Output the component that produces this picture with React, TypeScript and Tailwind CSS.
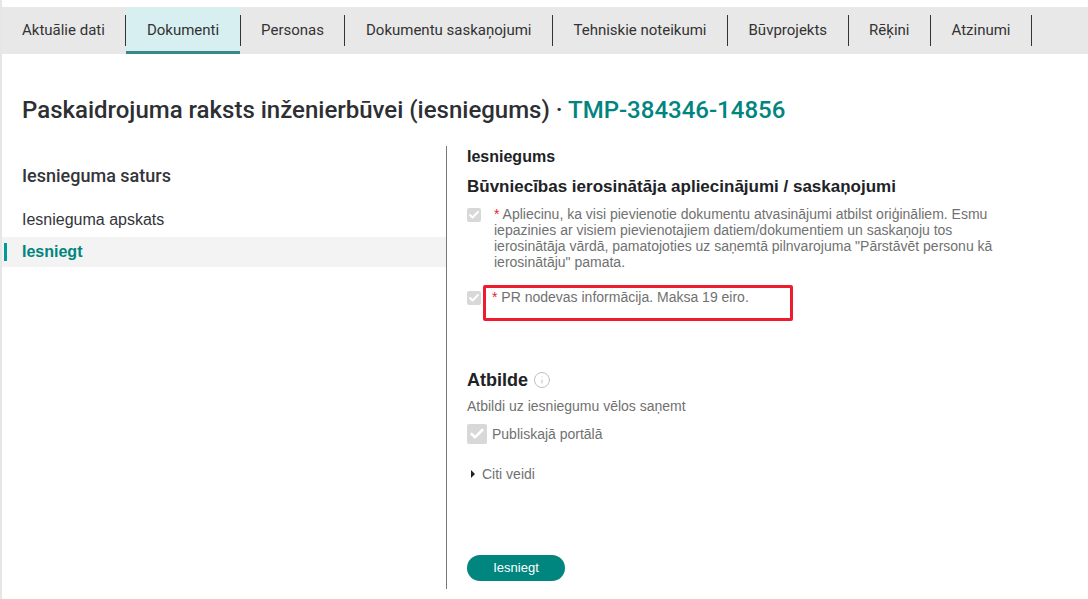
import { Check, Info } from 'lucide-react';

const tabs = ['Aktuālie dati', 'Dokumenti', 'Personas', 'Dokumentu saskaņojumi', 'Tehniskie noteikumi', 'Būvprojekts', 'Rēķini', 'Atzinumi'];

function Tick({ big }: { big?: boolean }) {
  return (
    <div className={`shrink-0 flex items-center justify-center rounded-[2px] bg-[#d8d8d8] ${big ? 'w-5 h-5' : 'w-[14px] h-[14px]'}`}>
      <Check className={`text-white ${big ? 'w-4 h-4' : 'w-3 h-3'}`} strokeWidth={4} />
    </div>
  );
}

export default function App() {
  return (
    <div className="relative w-[1088px] h-[599px] overflow-hidden bg-white border-l-2 border-[#e6e6e6] font-['Liberation_Sans',sans-serif] text-[#2d2f33]">
      {/* Tabs */}
      <div className="mt-[7px] h-[47px] bg-[#e8e8e8] flex font-['Roboto',sans-serif] text-[15px] text-[#333]">
        {tabs.map((tab, i) => (
          <div key={tab} className="relative flex items-center h-full">
            <div className={`h-full flex items-center px-[20.5px] ${i === 0 ? 'pl-5' : ''} ${i === 1 ? 'bg-[#d7eff0] border-b-[3px] border-[#3b8686]' : ''}`}>
              <span className={i === 1 ? 'pt-[3px]' : ''}>{tab}</span>
            </div>
            <div className="w-px h-[31px] bg-[#333]" />
          </div>
        ))}
      </div>

      <h1 className="ml-5 mt-[41px] text-2xl leading-[30px] font-medium font-['Roboto',sans-serif] text-[#2d2f33]">
        Paskaidrojuma raksts inženierbūvei (iesniegums) · <span className="text-[#00857f]">TMP-384346-14856</span>
      </h1>

      <div className="flex mt-[21px]">
        {/* Sidebar */}
        <div className="w-[444px] pt-5">
          <h2 className="ml-5 text-lg leading-5 font-medium font-['Roboto',sans-serif] text-[#33353a]">Iesnieguma saturs</h2>
          <div className="ml-5 mt-[24px] h-[20px] text-base leading-5 text-[#33353a]">Iesnieguma apskats</div>
          <div className="mt-[7px] h-[30px] bg-[#f3f3f3] flex items-center pl-0.5">
            <div className="w-[3px] h-[18px] bg-[#009b97]" />
            <span className="ml-[15px] text-base font-bold text-[#00857f]">Iesniegt</span>
          </div>
        </div>

        {/* Main column */}
        <div className="w-[642px] h-[443px] border-l border-[#777] pl-5 flex flex-col">
          <div className="mt-[1px] text-base leading-5 font-bold text-[#202226]">Iesniegums</div>
          <div className="mt-[10px] text-[17px] leading-5 font-bold text-[#202226]">Būvniecības ierosinātāja apliecinājumi / saskaņojumi</div>

          <div className="mt-[9px] flex">
            <div className="mt-[2px]"><Tick /></div>
            <p className="ml-[13px] w-[500px] text-sm leading-4 text-[#717171]">
              <span className="text-[#e8242f]">*</span> Apliecinu, ka visi pievienotie dokumentu atvasinājumi atbilst oriģināliem. Esmu iepazinies ar visiem pievienotajiem datiem/dokumentiem un saskaņoju tos ierosinātāja vārdā, pamatojoties uz saņemtā pilnvarojuma "Pārstāvēt personu kā ierosinātāju" pamata.
            </p>
          </div>

          <div className="mt-[19px] flex">
            <div className="mt-[2px]"><Tick /></div>
            <p className="ml-[11px] text-sm leading-4 text-[#717171]">
              <span className="text-[#e8242f]">*</span> PR nodevas informācija. Maksa 19 eiro.
            </p>
          </div>

          <div className="mt-[65px] flex items-center gap-[5px]">
            <span className="text-lg leading-5 font-bold text-[#202226]">Atbilde</span>
            <Info className="w-[18px] h-[18px] text-[#bdbdbd]" strokeWidth={1.3} />
          </div>
          <div className="mt-[8px] text-sm leading-4 text-[#717171]">Atbildi uz iesniegumu vēlos saņemt</div>
          <div className="mt-[10px] flex items-center gap-[5px]">
            <Tick big />
            <span className="text-sm leading-4 text-[#717171]">Publiskajā portālā</span>
          </div>
          <div className="mt-[22px] ml-1 flex items-center gap-[7px]">
            <div className="w-0 h-0 border-y-[4px] border-y-transparent border-l-[4px] border-l-[#222]" />
            <span className="text-sm leading-4 text-[#717171]">Citi veidi</span>
          </div>

          <button className="mt-[73px] w-[98px] h-[26px] rounded-full bg-[#00857f] text-white text-[13px] font-medium">Iesniegt</button>
        </div>
      </div>

      {/* Red annotation box drawn over the screenshot */}
      <div className="absolute left-[481px] top-[285px] w-[310px] h-[36px] border-[3px] border-[#ee1c2e] rounded-[2px]" />
    </div>
  );
}
